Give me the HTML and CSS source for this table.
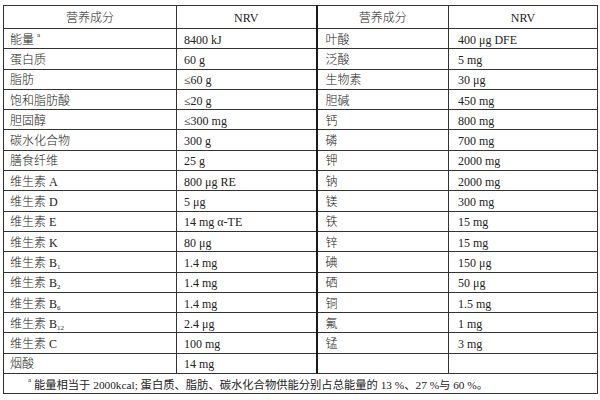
FILE: index.html
```html
<!DOCTYPE html>
<html lang="zh">
<head>
<meta charset="utf-8">
<link rel="stylesheet" href="styles.css">
</head>
<body>
<table class="nrv">
  <colgroup>
    <col class="c1"><col class="c2"><col class="c3"><col class="c4">
  </colgroup>
  <thead>
    <tr class="head">
      <th>营养成分</th><th class="mid">NRV</th><th>营养成分</th><th>NRV</th>
    </tr>
  </thead>
  <tbody>
    <tr><td>能量 <sup>a</sup></td><td class="mid">8400 kJ</td><td>叶酸</td><td>400 μg DFE</td></tr>
    <tr><td>蛋白质</td><td class="mid">60 g</td><td>泛酸</td><td>5 mg</td></tr>
    <tr><td>脂肪</td><td class="mid">≤60 g</td><td>生物素</td><td>30 μg</td></tr>
    <tr><td>饱和脂肪酸</td><td class="mid">≤20 g</td><td>胆碱</td><td>450 mg</td></tr>
    <tr><td>胆固醇</td><td class="mid">≤300 mg</td><td>钙</td><td>800 mg</td></tr>
    <tr><td>碳水化合物</td><td class="mid">300 g</td><td>磷</td><td>700 mg</td></tr>
    <tr><td>膳食纤维</td><td class="mid">25 g</td><td>钾</td><td>2000 mg</td></tr>
    <tr><td>维生素 A</td><td class="mid">800 μg RE</td><td>钠</td><td>2000 mg</td></tr>
    <tr><td>维生素 D</td><td class="mid">5 μg</td><td>镁</td><td>300 mg</td></tr>
    <tr><td>维生素 E</td><td class="mid">14 mg α-TE</td><td>铁</td><td>15 mg</td></tr>
    <tr><td>维生素 K</td><td class="mid">80 μg</td><td>锌</td><td>15 mg</td></tr>
    <tr><td>维生素 B<sub>1</sub></td><td class="mid">1.4 mg</td><td>碘</td><td>150 μg</td></tr>
    <tr><td>维生素 B<sub>2</sub></td><td class="mid">1.4 mg</td><td>硒</td><td>50 μg</td></tr>
    <tr><td>维生素 B<sub>6</sub></td><td class="mid">1.4 mg</td><td>铜</td><td>1.5 mg</td></tr>
    <tr><td>维生素 B<sub>12</sub></td><td class="mid">2.4 μg</td><td>氟</td><td>1 mg</td></tr>
    <tr><td>维生素 C</td><td class="mid">100 mg</td><td>锰</td><td>3 mg</td></tr>
    <tr><td>烟酸</td><td class="mid">14 mg</td><td></td><td></td></tr>
    <tr class="foot"><td colspan="4"><sup>a</sup> 能量相当于 2000kcal; 蛋白质、脂肪、碳水化合物供能分别占总能量的 13 %、27 %与 60 %。</td></tr>
  </tbody>
</table>
</body>
</html>
```

FILE: styles.css
```css
html, body {
  margin: 0;
  padding: 0;
  background: #ffffff;
}

body {
  padding: 5px 0 0 3px;
  font-family: "Liberation Serif", "Noto Sans CJK SC", serif;
  font-size: 12px;
  color: #222222;
}

.nrv {
  border-collapse: collapse;
  table-layout: fixed;
  width: 594px;
  border: 1.5px solid #2a2a2a;
}

.c1 { width: 173px; }
.c2 { width: 140px; }
.c3 { width: 132px; }
.c4 { width: 149px; }

.nrv th,
.nrv td {
  border: 1px solid #333333;
  padding: 0 0 0 7px;
  line-height: 14px;
  white-space: nowrap;
  overflow: hidden;
  font-weight: 300;
}

.nrv th {
  text-align: center;
  padding: 1px 0 0 0;
}

.head {
  height: 23px;
}

.nrv tbody tr {
  height: 20.3px;
}

.nrv td {
  padding-top: 2px;
}

.nrv .mid {
  border-right: 2px solid #1a1a1a;
}

.nrv td:nth-child(3) {
  padding-left: 8px;
}

.nrv td:nth-child(4) {
  padding-left: 9px;
}

.nrv td:first-child {
  padding-left: 6px;
}

sup {
  font-size: 7px;
  vertical-align: top;
  line-height: 0;
  position: relative;
  top: 2px;
}

sub {
  font-size: 7px;
  vertical-align: baseline;
  line-height: 0;
  position: relative;
  top: 2px;
}

.foot td,
.nrv .foot td:first-child {
  padding-left: 24px;
  font-size: 11.3px;
  font-weight: normal;
  color: #222222;
}
```
